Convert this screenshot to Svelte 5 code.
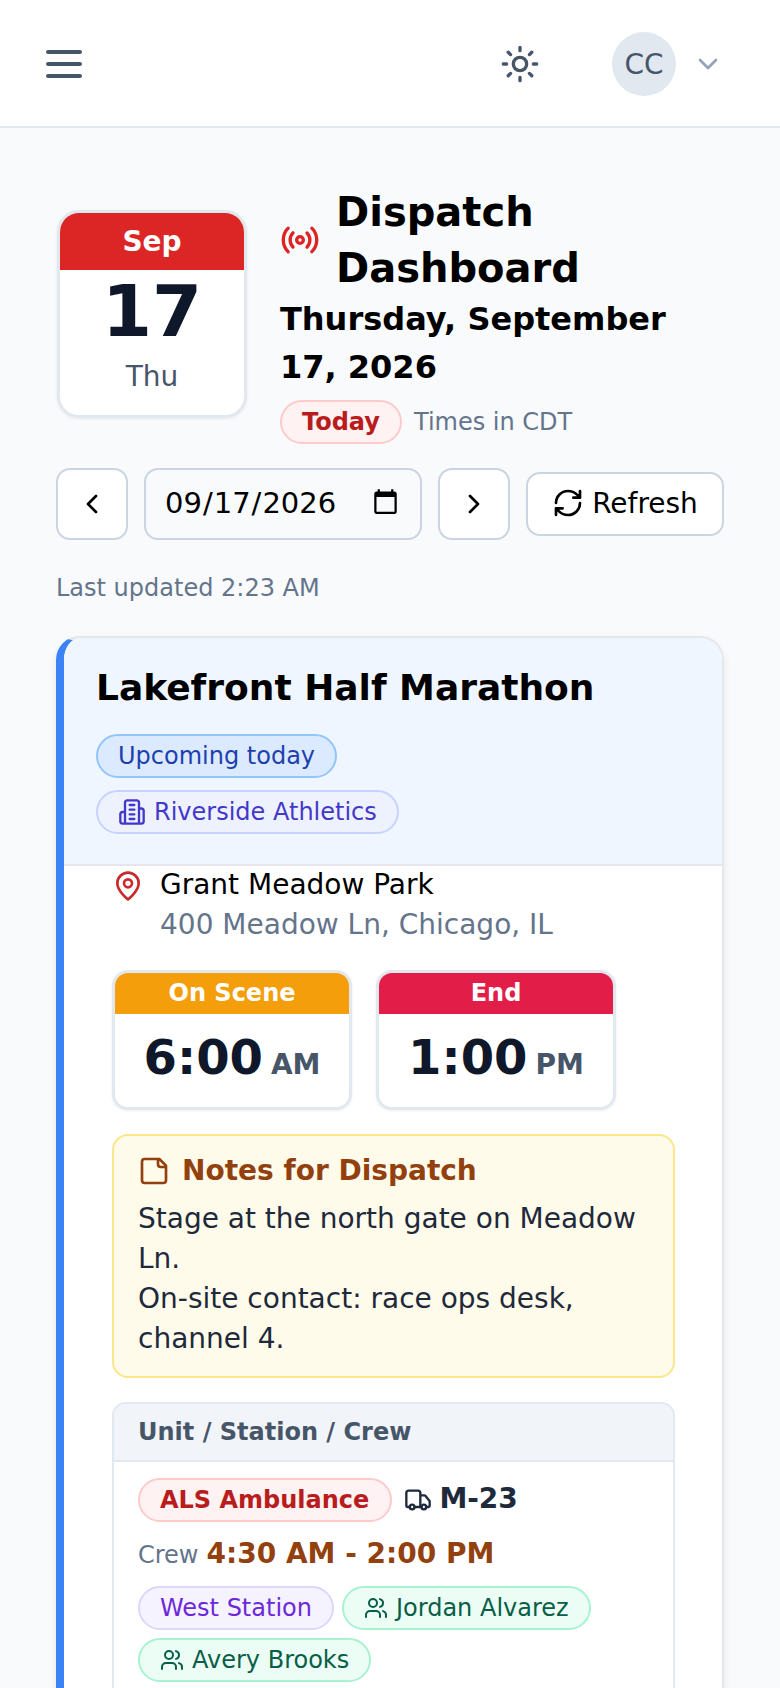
<script>
  const crew = ['Jordan Alvarez', 'Avery Brooks'];
</script>

<div class="page">
  <header class="topbar">
    <button class="iconbtn" aria-label="Menu">
      <svg width="48" height="48" viewBox="0 0 24 24" class="ic slate"><path d="M4 6h16M4 12h16M4 18h16" /></svg>
    </button>
    <div class="right">
      <svg width="40" height="40" viewBox="0 0 24 24" class="ic slate"><circle cx="12" cy="12" r="4" /><path d="M12 2v2M12 20v2M4.93 4.93l1.41 1.41M17.66 17.66l1.41 1.41M2 12h2M20 12h2M6.34 17.66l-1.41 1.41M19.07 4.93l-1.41 1.41" /></svg>
      <div class="user">
        <div class="avatar">CC</div>
        <svg width="32" height="32" viewBox="0 0 24 24" class="ic muted"><path d="m6 9 6 6 6-6" /></svg>
      </div>
    </div>
  </header>

  <main>
    <section class="hero">
      <div class="cal">
        <div class="cal-m">Sep</div>
        <div class="cal-d">17</div>
        <div class="cal-w">Thu</div>
      </div>
      <div class="hero-text">
        <div class="title-row">
          <svg width="40" height="40" viewBox="0 0 24 24" class="ic red"><path d="M4.9 19.1C1 15.2 1 8.8 4.9 4.9M7.8 16.2c-2.3-2.3-2.3-6.1 0-8.5M16.2 7.8c2.3 2.3 2.3 6.1 0 8.5M19.1 4.9C23 8.8 23 15.1 19.1 19" /><circle cx="12" cy="12" r="2" /></svg>
          <h1>Dispatch Dashboard</h1>
        </div>
        <div class="date">Thursday, September 17, 2026</div>
        <div class="today-row">
          <span class="pill today">Today</span>
          <span class="tz">Times in CDT</span>
        </div>
      </div>
    </section>

    <div class="controls">
      <button class="navbtn" aria-label="Previous day">
        <svg width="32" height="32" viewBox="0 0 24 24" class="ic"><path d="m15 18-6-6 6-6" /></svg>
      </button>
      <input class="dateinput" type="date" value="2026-09-17" />
      <button class="navbtn" aria-label="Next day">
        <svg width="32" height="32" viewBox="0 0 24 24" class="ic"><path d="m9 18 6-6-6-6" /></svg>
      </button>
      <button class="refresh">
        <svg width="32" height="32" viewBox="0 0 24 24" class="ic"><path d="M3 12a9 9 0 0 1 9-9 9.75 9.75 0 0 1 6.74 2.74L21 8M21 3v5h-5M21 12a9 9 0 0 1-9 9 9.75 9.75 0 0 1-6.74-2.74L3 16M8 16H3v5" /></svg>
        Refresh
      </button>
    </div>

    <p class="updated">Last updated 2:23 AM</p>

    <article class="card">
      <div class="card-head">
        <h2>Lakefront Half Marathon</h2>
        <div class="head-pills">
          <span class="pill upcoming">Upcoming today</span>
          <span class="pill org">
            <svg width="28" height="28" viewBox="0 0 24 24" class="ic"><path d="M6 22V4a2 2 0 0 1 2-2h8a2 2 0 0 1 2 2v18ZM6 12H4a2 2 0 0 0-2 2v6a2 2 0 0 0 2 2h2M18 9h2a2 2 0 0 1 2 2v9a2 2 0 0 1-2 2h-2M10 6h4M10 10h4M10 14h4M10 18h4" /></svg>
            Riverside Athletics
          </span>
        </div>
      </div>

      <div class="card-body">
        <div class="loc">
          <svg width="32" height="32" viewBox="0 0 24 24" class="ic pin"><path d="M20 10c0 6-8 12-8 12s-8-6-8-12a8 8 0 0 1 16 0Z" /><circle cx="12" cy="10" r="3" /></svg>
          <div>
            <div class="loc-name">Grant Meadow Park</div>
            <div class="loc-addr">400 Meadow Ln, Chicago, IL</div>
          </div>
        </div>

        <div class="times">
          <div class="time">
            <div class="time-h amber">On Scene</div>
            <div class="time-v">6:00<span>AM</span></div>
          </div>
          <div class="time">
            <div class="time-h rose">End</div>
            <div class="time-v">1:00<span>PM</span></div>
          </div>
        </div>

        <div class="notes">
          <div class="notes-h">
            <svg width="32" height="32" viewBox="0 0 24 24" class="ic"><path d="M16 3H5a2 2 0 0 0-2 2v14a2 2 0 0 0 2 2h14a2 2 0 0 0 2-2V8ZM15 3v4a2 2 0 0 0 2 2h4" /></svg>
            Notes for Dispatch
          </div>
          <p>Stage at the north gate on Meadow Ln.<br />On-site contact: race ops desk, channel 4.</p>
        </div>

        <div class="unit">
          <div class="unit-h">Unit / Station / Crew</div>
          <div class="unit-b">
            <div class="unit-row">
              <span class="pill als">ALS Ambulance</span>
              <span class="vehicle">
                <svg width="28" height="28" viewBox="0 0 24 24" class="ic dark"><path d="M14 18V6a2 2 0 0 0-2-2H4a2 2 0 0 0-2 2v11a1 1 0 0 0 1 1h2M15 18H9M19 18h2a1 1 0 0 0 1-1v-3.65a1 1 0 0 0-.22-.624l-3.48-4.35A1 1 0 0 0 17.52 8H14" /><circle cx="17" cy="18" r="2" /><circle cx="7" cy="18" r="2" /></svg>
                <strong>M-23</strong>
              </span>
            </div>
            <div class="crew-time"><span>Crew</span><b>4:30 AM - 2:00 PM</b></div>
            <div class="chips">
              <span class="pill station">West Station</span>
              {#each crew as person}
                <span class="pill person">
                  <svg width="24" height="24" viewBox="0 0 24 24" class="ic"><path d="M16 21v-2a4 4 0 0 0-4-4H6a4 4 0 0 0-4 4v2M22 21v-2a4 4 0 0 0-3-3.87M16 3.13a4 4 0 0 1 0 7.75" /><circle cx="9" cy="7" r="4" /></svg>
                  {person}
                </span>
              {/each}
            </div>
          </div>
        </div>
      </div>
    </article>
  </main>
</div>

<style>
  :global(body) {
    margin: 0;
    background: #f8fafc;
    font-family: "DejaVu Sans", sans-serif;
    color: #000;
  }
  .page {
    height: 1688px;
    overflow: hidden;
  }
  .ic {
    fill: none;
    stroke: currentColor;
    stroke-width: 2;
    stroke-linecap: round;
    stroke-linejoin: round;
    flex: none;
    display: block;
  }
  .slate { color: #475569; }
  .muted { color: #94a3b8; }
  .red { color: #dc2626; }
  .pin { color: #ca2a2a; }
  .dark { color: #1e293b; }
  button {
    font-family: inherit;
    color: inherit;
    cursor: pointer;
  }
  .topbar {
    box-sizing: border-box;
    height: 128px;
    background: #fff;
    border-bottom: 2px solid #e2e8f0;
    display: flex;
    align-items: center;
    justify-content: space-between;
    padding: 2px 56px 0 40px;
  }
  .iconbtn {
    background: none;
    border: 0;
    padding: 0;
  }
  .right {
    display: flex;
    align-items: center;
    gap: 72px;
  }
  .user {
    display: flex;
    align-items: center;
    gap: 16px;
  }
  .avatar {
    width: 64px;
    height: 64px;
    border-radius: 50%;
    background: #e2e8f0;
    color: #475569;
    font-size: 28px;
    display: flex;
    align-items: center;
    justify-content: center;
  }
  main {
    padding: 56px 56px 0;
  }
  .hero {
    display: flex;
    align-items: center;
    gap: 33px;
  }
  .cal {
    width: 184px;
    flex: none;
    margin-left: 1px;
    border: 3px solid #e2e8f0;
    border-radius: 22px;
    background: #fff;
    overflow: hidden;
    text-align: center;
    box-shadow: 0 1px 3px rgba(0, 0, 0, 0.08);
  }
  .cal-m {
    background: #dc2626;
    color: #fff;
    font-weight: 700;
    font-size: 28px;
    line-height: 57px;
  }
  .cal-d {
    font-size: 72px;
    font-weight: 700;
    line-height: 80px;
    padding-top: 1px;
    color: #0f172a;
  }
  .cal-w {
    font-size: 28px;
    line-height: 42px;
    color: #475569;
    padding: 5px 0 17px;
  }
  .hero-text {
    flex: 1;
    min-width: 0;
  }
  .title-row {
    display: flex;
    align-items: center;
    gap: 16px;
  }
  h1 {
    margin: 0;
    font-size: 40px;
    line-height: 56px;
    font-weight: 700;
  }
  .date {
    margin-top: -1px;
    font-size: 32px;
    line-height: 48px;
    font-weight: 700;
  }
  .today-row {
    display: flex;
    align-items: center;
    gap: 12px;
    margin-top: 9px;
  }
  .pill {
    display: inline-flex;
    align-items: center;
    gap: 8px;
    box-sizing: border-box;
    height: 44px;
    padding: 0 20px;
    border: 2px solid;
    border-radius: 999px;
    font-size: 24px;
    white-space: nowrap;
  }
  .today {
    background: #fef2f2;
    border-color: #fecaca;
    color: #b91c1c;
    font-weight: 700;
  }
  .tz {
    font-size: 24px;
    color: #64748b;
  }
  .controls {
    display: flex;
    align-items: center;
    gap: 16px;
    margin-top: 24px;
  }
  .navbtn {
    width: 72px;
    height: 72px;
    flex: none;
    box-sizing: border-box;
    background: #fff;
    border: 2px solid #cbd5e1;
    border-radius: 14px;
    display: flex;
    align-items: center;
    justify-content: center;
    padding: 0;
  }
  .dateinput {
    width: 278px;
    height: 72px;
    flex: none;
    box-sizing: border-box;
    background: #f8fafc;
    border: 2px solid #cbd5e1;
    border-radius: 14px;
    padding: 0 18px 3px 18px;
    font-family: inherit;
    font-size: 29px;
    color: #000;
  }
  .refresh {
    height: 64px;
    flex: 1;
    box-sizing: border-box;
    background: #fff;
    border: 2px solid #cbd5e1;
    border-radius: 14px;
    display: flex;
    align-items: center;
    justify-content: center;
    gap: 8px;
    font-size: 28px;
    padding: 0 0 2px;
  }
  .updated {
    margin: 32px 0 0;
    font-size: 24px;
    line-height: 32px;
    color: #64748b;
  }
  .card {
    margin-top: 32px;
    background: #fff;
    border: 2px solid #e5e7eb;
    border-left: 8px solid #3b82f6;
    border-radius: 24px;
    overflow: hidden;
    box-shadow: 0 4px 8px rgba(0, 0, 0, 0.08);
  }
  .card-head {
    background: #eff6ff;
    border-bottom: 2px solid #e5e7eb;
    padding: 23px 32px 30px;
  }
  h2 {
    margin: 0;
    font-size: 36px;
    line-height: 54px;
    font-weight: 700;
  }
  .head-pills {
    display: flex;
    flex-direction: column;
    align-items: flex-start;
    gap: 12px;
    margin-top: 19px;
  }
  .upcoming {
    background: #dbeafe;
    border-color: #93c5fd;
    color: #1e40af;
  }
  .org {
    background: #eef2ff;
    border-color: #c7d2fe;
    color: #4338ca;
  }
  .card-body {
    padding: 0 47px 0 48px;
  }
  .loc {
    display: flex;
    gap: 16px;
    margin-top: -1px;
  }
  .loc .ic {
    margin-top: 5px;
  }
  .loc-name {
    font-size: 28px;
    line-height: 40px;
  }
  .loc-addr {
    font-size: 28px;
    line-height: 40px;
    color: #64748b;
  }
  .times {
    display: flex;
    gap: 24px;
    margin-top: 25px;
  }
  .time {
    width: 240px;
    box-sizing: border-box;
    border: 3px solid #e2e8f0;
    border-radius: 16px;
    overflow: hidden;
    background: #fff;
    box-shadow: 0 1px 3px rgba(0, 0, 0, 0.08);
    text-align: center;
  }
  .time-h {
    color: #fff;
    font-weight: 700;
    font-size: 24px;
    line-height: 41px;
  }
  .amber { background: #f59e0b; }
  .rose { background: #e11d48; }
  .time-v {
    font-size: 48px;
    font-weight: 700;
    color: #0f172a;
    line-height: 87px;
    height: 93px;
  }
  .time-v span {
    font-size: 28px;
    color: #475569;
    margin-left: 8px;
  }
  .notes {
    margin-top: 24px;
    background: #fffbeb;
    border: 2px solid #fde68a;
    border-radius: 16px;
    padding: 17px 24px;
  }
  .notes-h {
    display: flex;
    align-items: center;
    gap: 12px;
    font-size: 28px;
    font-weight: 700;
    color: #92400e;
    line-height: 36px;
  }
  .notes p {
    margin: 10px 0 0;
    font-size: 28px;
    line-height: 40px;
    color: #1e293b;
  }
  .unit {
    margin-top: 24px;
    border: 2px solid #e2e8f0;
    border-radius: 14px;
    overflow: hidden;
  }
  .unit-h {
    background: #f1f5f9;
    border-bottom: 2px solid #e2e8f0;
    padding: 0 24px;
    line-height: 56px;
    font-size: 24px;
    font-weight: 700;
    color: #475569;
  }
  .unit-b {
    padding: 16px 24px 24px;
  }
  .unit-row {
    display: flex;
    align-items: center;
    gap: 12px;
  }
  .vehicle {
    display: flex;
    align-items: center;
    gap: 7px;
  }
  .vehicle strong {
    font-size: 28px;
    line-height: 32px;
    margin-top: -2px;
    color: #1e293b;
  }
  .als {
    background: #fef2f2;
    border-color: #fecaca;
    color: #b91c1c;
    font-weight: 700;
    padding-right: 21px;
  }
  .crew-time {
    margin-top: 12px;
    line-height: 40px;
  }
  .crew-time span {
    font-size: 24px;
    color: #64748b;
  }
  .crew-time b {
    font-size: 28px;
    color: #92400e;
    margin-left: 8px;
  }
  .chips {
    display: flex;
    flex-wrap: wrap;
    gap: 8px;
    margin-top: 8px;
  }
  .station {
    background: #f5f3ff;
    border-color: #ddd6fe;
    color: #6d28d9;
  }
  .person {
    background: #ecfdf5;
    border-color: #a7f3d0;
    color: #065f46;
  }
</style>
